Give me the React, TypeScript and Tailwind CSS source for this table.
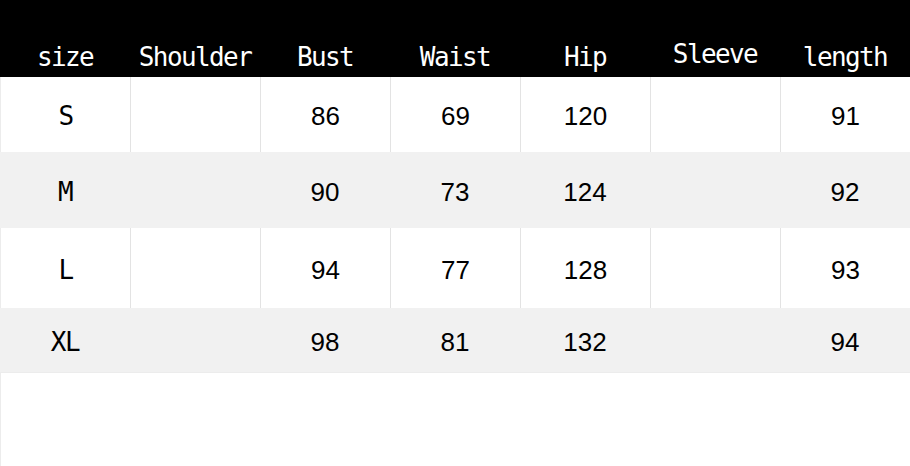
import React from "react";

const headers = ["size", "Shoulder", "Bust", "Waist", "Hip", "Sleeve", "length"];
const rows: { cells: string[]; gray: boolean; h: string }[] = [
  { cells: ["S", "", "86", "69", "120", "", "91"], gray: false, h: "h-[75px]" },
  { cells: ["M", "", "90", "73", "124", "", "92"], gray: true, h: "h-[76px]" },
  { cells: ["L", "", "94", "77", "128", "", "93"], gray: false, h: "h-[80px]" },
  { cells: ["XL", "", "98", "81", "132", "", "94"], gray: true, h: "h-[64px]" },
];

export default function App() {
  return (
    <div className="w-[910px] h-[466px] bg-white overflow-hidden flex flex-col">
      <div className="h-[77px] bg-black grid grid-cols-7 items-end pb-[5px]">
        {headers.map((h) => (
          <div
            key={h}
            className={`text-center text-white text-[26px] leading-[30px] tracking-[-1.6px] font-['DejaVu_Sans_Mono',monospace] ${
              h === "Sleeve" ? "-translate-y-[3px]" : ""
            }`}
          >
            {h}
          </div>
        ))}
      </div>
      {rows.map((r, i) => (
        <div key={i} className={`grid grid-cols-7 ${r.h} ${r.gray ? "bg-[#f1f1f1]" : "bg-white"}`}>
          {r.cells.map((c, j) => (
            <div
              key={j}
              className={`flex items-center justify-center pt-[4px] text-black ${
                !r.gray ? (j > 0 ? "border-l border-[#e3e3e3]" : "border-l border-[#ececec]") : ""
              } ${
                j === 0
                  ? "text-[26px] font-['DejaVu_Sans_Mono',monospace] tracking-[-1.5px]"
                  : "text-[26px] font-['Liberation_Sans',Arial,sans-serif]"
              }`}
            >
              {c}
            </div>
          ))}
        </div>
      ))}
      <div className="flex-1 bg-white border-l border-t border-[#ececec]" />
    </div>
  );
}
